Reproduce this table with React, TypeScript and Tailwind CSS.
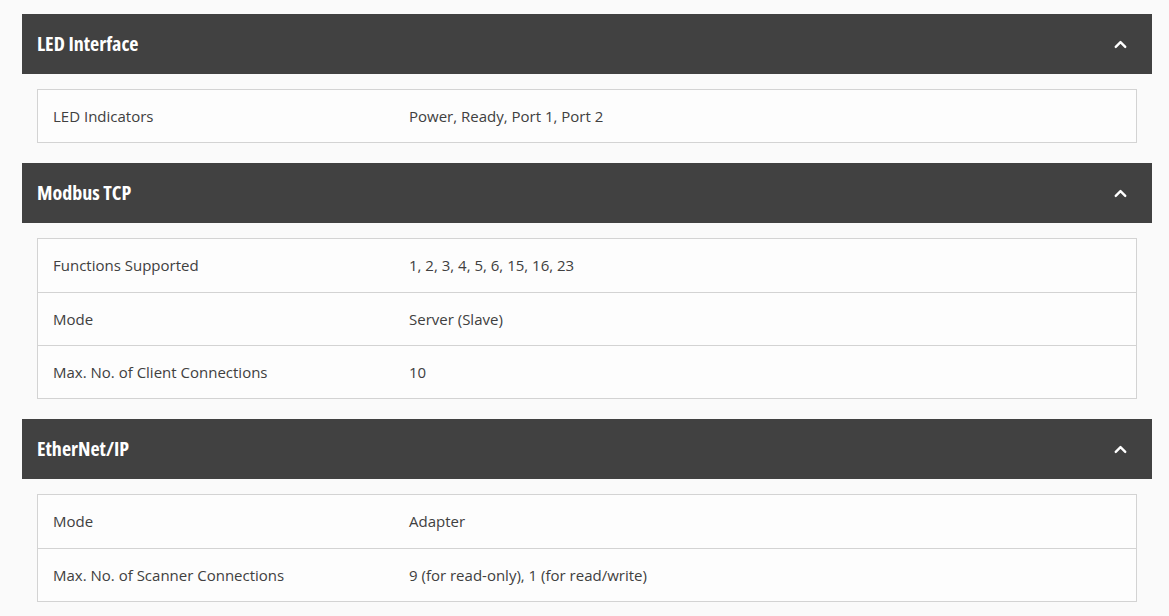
import { ChevronUp } from "lucide-react";

type Section = {
  title: string;
  rows: [string, string][];
};

const sections: Section[] = [
  {
    title: "LED Interface",
    rows: [["LED Indicators", "Power, Ready, Port 1, Port 2"]],
  },
  {
    title: "Modbus TCP",
    rows: [
      ["Functions Supported", "1, 2, 3, 4, 5, 6, 15, 16, 23"],
      ["Mode", "Server (Slave)"],
      ["Max. No. of Client Connections", "10"],
    ],
  },
  {
    title: "EtherNet/IP",
    rows: [
      ["Mode", "Adapter"],
      ["Max. No. of Scanner Connections", "9 (for read-only), 1 (for read/write)"],
    ],
  },
];

function SpecSection({ section }: { section: Section }) {
  return (
    <section className="mb-[20px]">
      <div className="flex h-[60px] items-center justify-between bg-[#414141] pl-[15px] pr-[22px]">
        <h2 className="font-['Open_Sans'] text-[20px] font-bold text-white font-stretch-condensed">
          {section.title}
        </h2>
        <ChevronUp className="h-[19px] w-[19px] text-white" strokeWidth={3} />
      </div>
      <div className="mx-[15px] mt-[15px] border-x border-t border-[#d3d3d3] bg-[#fdfdfd]">
        {section.rows.map(([label, value]) => (
          <div
            key={label}
            className="flex h-[53.33px] items-center border-b border-[#d3d3d3] font-['Open_Sans'] text-[15px] text-[#404040]"
          >
            <div className="w-[356px] shrink-0 pl-[15px]">{label}</div>
            <div className="pl-[15px]">{value}</div>
          </div>
        ))}
      </div>
    </section>
  );
}

export default function App() {
  return (
    <div className="min-h-screen bg-[#fafafa] px-[22px] pt-[14px] pr-[17px]">
      {sections.map((s) => (
        <SpecSection key={s.title} section={s} />
      ))}
    </div>
  );
}
